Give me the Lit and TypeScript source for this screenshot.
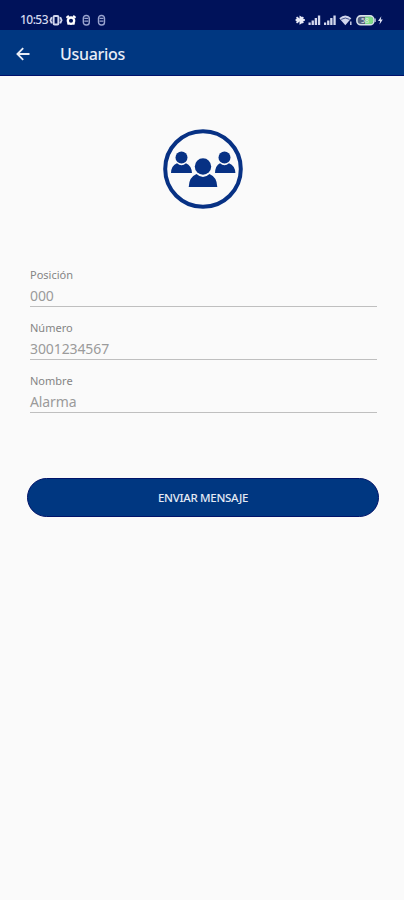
import { LitElement, html, css, svg } from "lit";
import { customElement, property } from "lit/decorators.js";

@customElement("status-bar")
class StatusBar extends LitElement {
  static styles = css`
    :host { display: flex; justify-content: space-between; height: 30px; background: #00125a; color: #d3d8ee; box-sizing: border-box; padding: 11px 20px 0; }
    .group { display: flex; height: 18px; align-items: center; }
    .time { font: 500 12px/18px "Noto Sans", sans-serif; letter-spacing: -0.55px; width: 29px; white-space: nowrap; }
    svg { display: block; }
  `;
  render() {
    const mouse = (x: number) => svg`
      <g transform="translate(${x} 0)" fill="none" stroke="#9aa4cf">
        <rect x="-3" y="4.5" width="6" height="9.5" rx="2.8" stroke-width="1.4"/>
        <path d="M-2 7.4H2M-2 10.2H2" stroke-width="1.2"/>
      </g>`;
    const bars = (x: number) => svg`
      <g transform="translate(${x} 0)" fill="currentColor">
        <rect x="0" y="11.5" width="2.2" height="2.5"/><rect x="3.1" y="9.5" width="2.3" height="4.5"/>
        <rect x="6.2" y="7" width="2.3" height="7"/><rect x="9.4" y="4.5" width="2.3" height="9.5"/>
      </g>`;
    return html`
      <div class="group">
        <span class="time">10:53</span>
        <svg width="60" height="18" viewBox="0 0 60 18">
          <rect x="4.6" y="5" width="4.8" height="8.6" rx="1" fill="none" stroke="currentColor" stroke-width="2"/>
          <path d="M2.8 6.2L1.4 9.3L2.8 12.4M11.2 6.2L12.6 9.3L11.2 12.4" fill="none" stroke="currentColor" stroke-width="1.8"/>
          <circle cx="22" cy="9.7" r="3.2" fill="none" stroke="#fff" stroke-width="2.3"/>
          <path d="M17.4 6.8L19.8 4.8M26.6 6.8L24.2 4.8M19.6 12.2L18.6 13.6M24.4 12.2L25.4 13.6" stroke="#fff" stroke-width="1.8" fill="none"/>
          ${mouse(37.3)}${mouse(52.5)}
        </svg>
      </div>
      <div class="group">
        <svg width="89" height="18" viewBox="295 0 89 18">
          <path d="M296.5 6.2L303.4 11.8M303.4 6.2L296.5 11.8M295.6 9H304.8" fill="none" stroke="#e8ebf7" stroke-width="1.9"/>
          <path d="M299.5 4.5L303.2 6.8L300 9L303.2 11.6L299.5 13.8Z" fill="#e8ebf7"/>
          ${bars(308.5)}${bars(324)}
          <path d="M339.3 7.2Q345.3 2 351.3 7.2L345.3 14.2Z" fill="currentColor"/>
          <path d="M341.2 8.4Q345.3 5.6 349.6 8.4" fill="none" stroke="#00125a" stroke-width="0.7"/>
          <path d="M350.8 10.5V14" stroke="currentColor" stroke-width="1.4"/>
          <rect x="356.9" y="4.9" width="17" height="8.8" rx="3.8" fill="#536080" stroke="#d8e2e9" stroke-width="1.6"/>
          <path d="M365 5.7H370.6Q373.2 5.7 373.2 9.3T370.6 12.9H365Z" fill="#7fdd87"/>
          <text x="361" y="11.8" font-family="Noto Sans" font-size="7" fill="#e5edf0">58</text>
          <path d="M375.2 7.5V11" stroke="#d8e2e9" stroke-width="1"/>
          <path d="M381.3 5.2L378 10H380.1L379.5 13.4L382.8 8.6H380.8Z" fill="#dfe3f4"/>
        </svg>
      </div>`;
  }
}

@customElement("text-field")
class TextField extends LitElement {
  @property() label = "";
  @property() value = "";
  static styles = css`
    :host { display: block; height: 53px; box-sizing: border-box; font-family: "Noto Sans", sans-serif; }
    .label { font-size: 11px; line-height: 15px; color: #858585; height: 18px; }
    .value { font-size: 14px; line-height: 21px; height: 21px; color: #9b9b9b; border-bottom: 1px solid #bfbfbf; letter-spacing: -0.1px; }
  `;
  render() {
    return html`<div class="label">${this.label}</div><div class="value">${this.value}</div>`;
  }
}

@customElement("app-root")
class AppRoot extends LitElement {
  static styles = css`
    :host { display: flex; flex-direction: column; height: 900px; background: #fafafa; font-family: "Noto Sans", sans-serif; }
    .bar { display: flex; align-items: center; height: 46px; box-sizing: border-box; padding: 2px 0 0 16px; background: #003781; border-bottom: 1px solid #00116b; color: #e9edf6; }
    .title { margin: 1px 0 0 30px; font-size: 16px; font-weight: 500; line-height: 24px; letter-spacing: -0.3px; }
    .emblem { display: block; margin: 53px 0 0 163px; }
    .fields { margin: 58px 27px 0 30px; }
    .send { display: block; box-sizing: border-box; width: 352px; height: 39px; margin: 52px 0 0 27px; padding: 0; border: 1px solid #001369; border-radius: 20px; background: #003781; color: #e4eaf5; font: 500 11.5px/37px "Noto Sans", sans-serif; letter-spacing: -0.3px; }
  `;
  render() {
    return html`
      <status-bar></status-bar>
      <header class="bar">
        <svg width="14" height="14" viewBox="0 0 14 14" fill="none" stroke="#e9edf6" stroke-width="1.8"><path d="M13.5 7H1.6M7.2 1.2L1.4 7L7.2 12.8"/></svg>
        <span class="title">Usuarios</span>
      </header>
      <svg class="emblem" width="80" height="80" viewBox="0 0 80 80" fill="#073184">
        <circle cx="40" cy="40" r="37.8" fill="none" stroke="#073184" stroke-width="4"/>
        <circle cx="18.5" cy="28.5" r="6"/><circle cx="61.5" cy="28.5" r="6"/>
        <path d="M8 44Q8.2 36.5 14 34.2Q18.5 38.5 23 34.2Q28.5 36.5 29 44Z"/>
        <path d="M52 44Q52.2 36.5 57 34.2Q61.5 38.5 66 34.2Q72 36.5 72.4 44Z"/>
        <circle cx="40" cy="37.5" r="8.2"/>
        <path d="M25.7 58Q26 48 33.5 45Q40 51 46.5 45Q54 48 54.3 58Z"/>
      </svg>
      <div class="fields">
        <text-field label="Posición" value="000"></text-field>
        <text-field label="Número" value="3001234567"></text-field>
        <text-field label="Nombre" value="Alarma"></text-field>
      </div>
      <button class="send">ENVIAR MENSAJE</button>`;
  }
}
